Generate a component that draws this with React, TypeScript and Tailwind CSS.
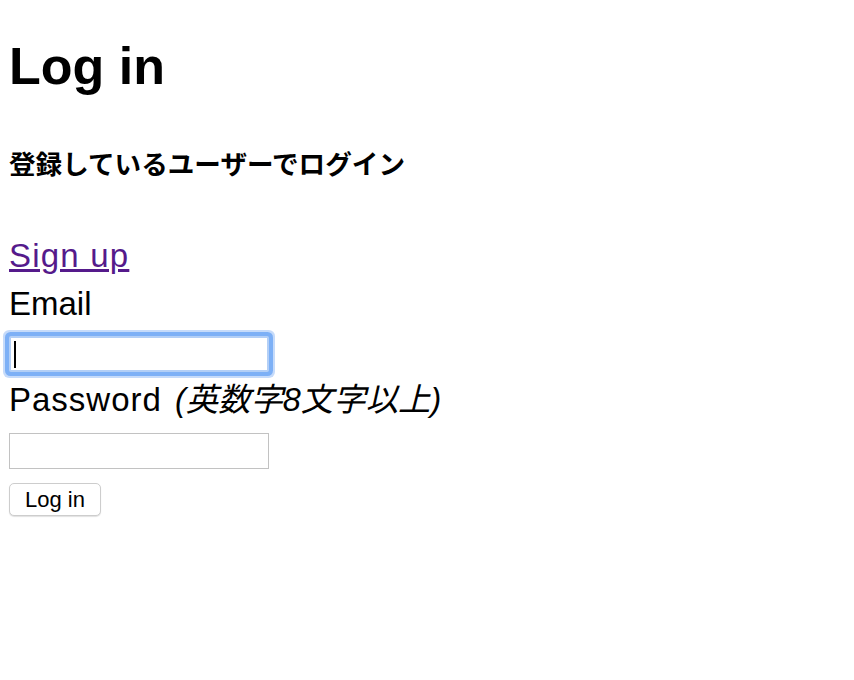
import React from "react";

export default function App() {
  return (
    <div
      className="flex min-h-[680px] w-full flex-col items-start bg-white pl-[9px] pt-[36px] text-black"
      style={{ fontFamily: '"Liberation Sans", "Noto Sans CJK JP", sans-serif' }}
    >
      <h1 className="h-[60px] text-[52px] font-bold leading-[60px]">Log in</h1>
      <h4 className="mt-[50px] h-[38px] text-[26.6px] font-bold leading-[38px]">
        登録しているユーザーでログイン
      </h4>
      <div className="mt-[48px] h-[48px] text-[33px] leading-[48px]">
        <a href="#" className="tracking-[1.2px] text-[#551a8b] underline">
          Sign up
        </a>
      </div>
      <form className="flex flex-col items-start" onSubmit={(e) => e.preventDefault()}>
        <label className="h-[48px] text-[33px] leading-[48px]">Email</label>
        <div className="relative mt-[8px]">
          <input
            type="email"
            className="block h-[36px] w-[260px] rounded-[2px] border-2 border-[#b3cff6] bg-white caret-transparent shadow-[0_0_0_4px_#7db0f6,0_0_0_6px_#c6dbfa] outline-none"
          />
          <span className="absolute left-[5px] top-[5px] h-[27px] w-[2px] bg-black" />
        </div>
        <label className="mt-[4px] flex h-[48px] items-baseline whitespace-nowrap text-[33px] leading-[48px]">
          <span className="tracking-[1px]">Password</span>
          <i className="ml-[13px] text-[32.4px] italic">(英数字8文字以上)</i>
        </label>
        <input
          type="password"
          className="mt-[9px] block h-[36px] w-[260px] border border-[#c2c2c2] bg-white outline-none"
        />
        <button
          type="submit"
          className="mt-[14px] flex h-[33px] w-[92px] items-center justify-center rounded-[5px] border border-[#cdcdcd] bg-white text-[22px] leading-none shadow-[0_1px_1px_rgba(0,0,0,0.12)]"
        >
          Log in
        </button>
      </form>
    </div>
  );
}
